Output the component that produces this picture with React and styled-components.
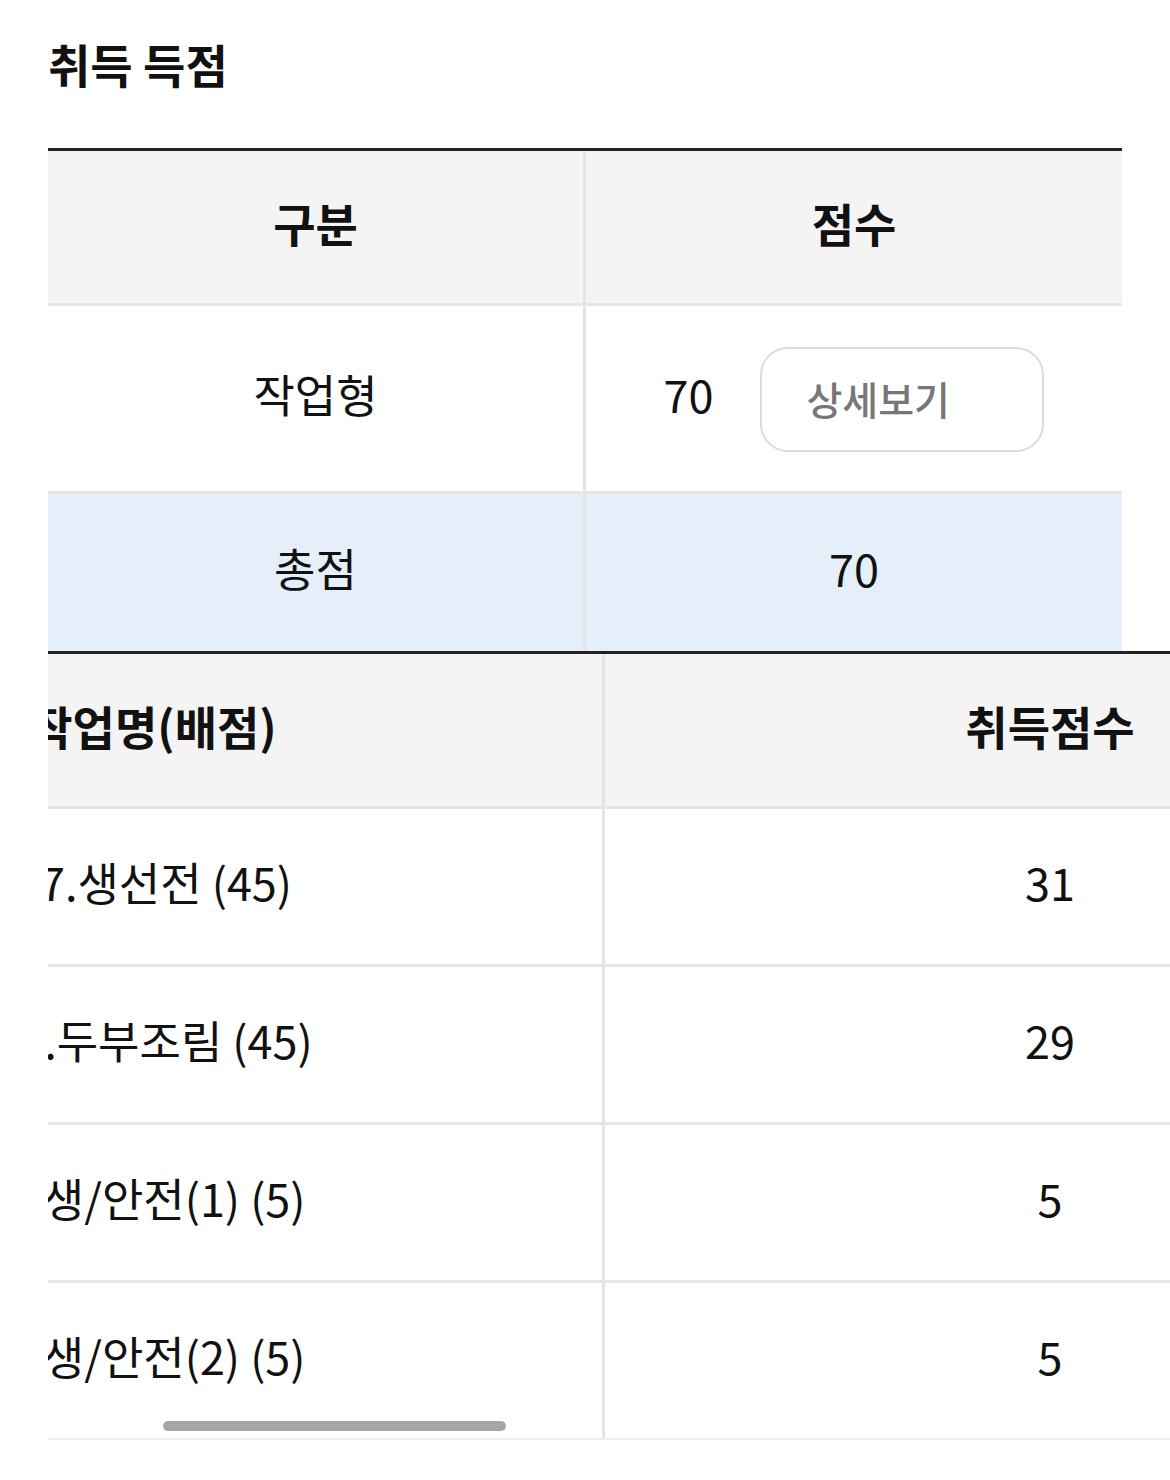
import React, { useLayoutEffect, useRef } from 'react'
import { styled, createGlobalStyle } from 'styled-components'

const GlobalStyle = createGlobalStyle`
body{
  margin:0;
  background:#fff;
  color:#111;
  font-family:"Noto Sans CJK KR","Noto Sans",sans-serif;
}
`;

const Page = styled.div`
padding: 0 48px;
`;

const Title = styled.h2`
margin: 0 0 54px;
padding-top: 32px;
font-size: 46px;
line-height: 62px;
font-weight: 700;
`;

// summary table
const Board = styled.div`
border-top: 3px solid #222;
width: ${({ $width }) => $width || 'auto'};
`;

const Row = styled.div`
display: grid;
grid-template-columns: ${({ $cols }) => $cols};
height: ${({ $h }) => $h}px;
background: ${({ $bg }) => $bg || '#fff'};
border-bottom: ${({ $line }) => $line || '3px solid #e6e6e6'};
box-sizing: content-box;
`;

const Cell = styled.div`
display: flex;
align-items: center;
justify-content: center;
gap: 47px;
padding-bottom: 10px;
font-size: ${({ $head }) => ($head ? 46 : 45)}px;
font-weight: ${({ $head }) => ($head ? 700 : 400)};
white-space: nowrap;
box-sizing: border-box;
border-right: ${({ $divider }) => ($divider ? '3px solid #e4e4e4' : 'none')};
`;

const DetailButton = styled.button`
width: 284px;
height: 105px;
margin-top: 12px;
box-sizing: border-box;
padding: 0 0 4px 44px;
text-align: left;
background: #fff;
border: 2px solid #dcdcdc;
border-radius: 28px;
font-family: inherit;
font-size: 39px;
font-weight: 500;
color: #777;
cursor: pointer;
`;

// detail table (scrolled sideways)
const Frame = styled.div`
position: relative;
margin-right: -48px;
`;

const Scroller = styled.div`
overflow-x: auto;
scrollbar-width: none;
&::-webkit-scrollbar { display: none; }
`;

const Thumb = styled.div`
position: absolute;
left: 115px;
bottom: 9px;
width: 343px;
height: 10px;
border-radius: 5px;
background: #a6a6a6;
`;

const TABLE1 = '538px 1fr';
const TABLE2 = '900px 890px';

const tasks = [
  { name: '17.생선전 (45)', score: 31 },
  { name: '18.두부조림 (45)', score: 29 },
  { name: '위생/안전(1) (5)', score: 5 },
  { name: '위생/안전(2) (5)', score: 5 },
];

const App = () => {
  const scrollRef = useRef(null);

  useLayoutEffect(() => {
    if (scrollRef.current) scrollRef.current.scrollLeft = 343;
  }, []);

  return (
    <Page>
      <GlobalStyle />
      <Title>취득 득점</Title>

      <Board>
        <Row $cols={TABLE1} $h={152} $bg="#f4f4f4">
          <Cell $head $divider>구분</Cell>
          <Cell $head>점수</Cell>
        </Row>
        <Row $cols={TABLE1} $h={185}>
          <Cell $divider>작업형</Cell>
          <Cell>
            70
            <DetailButton>상세보기</DetailButton>
          </Cell>
        </Row>
        <Row $cols={TABLE1} $h={157} $bg="#e5eff9" $line="none">
          <Cell $divider>총점</Cell>
          <Cell>70</Cell>
        </Row>
      </Board>

      <Frame>
        <Scroller ref={scrollRef}>
          <Board $width="1790px">
            <Row $cols={TABLE2} $h={152} $bg="#f4f4f4">
              <Cell $head $divider>작업명(배점)</Cell>
              <Cell $head>취득점수</Cell>
            </Row>
            {tasks.map((t, i) => (
              <Row
                key={t.name}
                $cols={TABLE2}
                $h={155}
                $line={i === tasks.length - 1 ? '2px solid #eeeeee' : undefined}
              >
                <Cell $divider>{t.name}</Cell>
                <Cell>{t.score}</Cell>
              </Row>
            ))}
          </Board>
        </Scroller>
        <Thumb />
      </Frame>
    </Page>
  )
}

export default App
